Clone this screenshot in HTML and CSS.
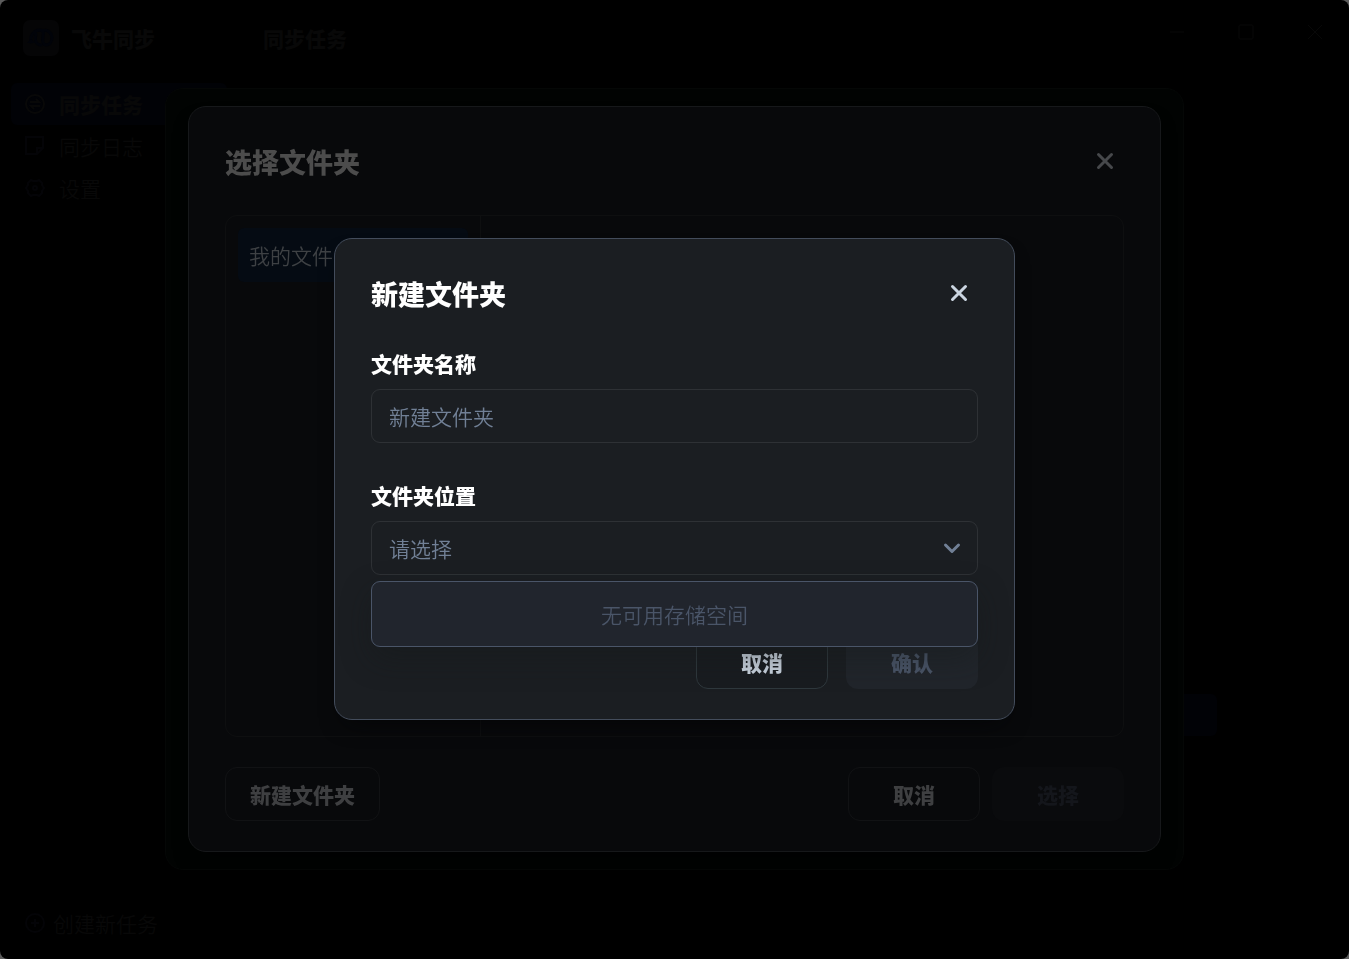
FILE: index.html
```html
<!DOCTYPE html>
<html lang="zh-CN">
<head>
<meta charset="utf-8">
<meta name="viewport" content="width=device-width, initial-scale=1">
<title>飞牛同步</title>
<link rel="stylesheet" href="styles.css">
</head>
<body>
<div class="window">
  <aside class="sidebar">
    <div class="brand">
      <svg class="brand-logo" viewBox="0 0 36 36" aria-hidden="true">
        <rect width="36" height="36" rx="7" fill="#050506"/>
        <path d="M8 22c-1-7 3-12 9-12 3 0 4 2 3 6-1 5 0 9 3 9 4 0 6-4 6-8M13 14c-2 6 0 11 5 11M19 11c5-2 9 1 10 6" fill="none" stroke="#010309" stroke-width="3" stroke-linecap="round"/>
        <path d="M4 23l4-4 4 4z" fill="#010309"/>
      </svg>
      <span class="brand-name">飞牛同步</span>
    </div>
    <nav class="nav">
      <a class="nav-item nav-item-active" href="#tasks">
        <svg class="icon" viewBox="0 0 20 20"><circle cx="10" cy="10" r="9"/><path d="M5 8h9l-3-3M15 12H6l3 3"/></svg>
        同步任务
      </a>
      <a class="nav-item" href="#logs">
        <svg class="icon" viewBox="0 0 20 20"><path d="M1 1h17v11l-6 6H1zM18 12h-6v6"/></svg>
        同步日志
      </a>
      <a class="nav-item" href="#settings">
        <svg class="icon" viewBox="0 0 20 20"><path d="M6 2l2 1h4l2-1 3 3v2l2 3-2 3v2l-3 3-2-1H8l-2 1-3-3v-2l-2-3 2-3V5z"/><circle cx="10" cy="10" r="2"/></svg>
        设置
      </a>
    </nav>
    <button class="create-task" type="button">
      <svg class="icon" viewBox="0 0 20 20"><circle cx="10" cy="10" r="9"/><path d="M10 6v8M6 10h8"/></svg>
      创建新任务
    </button>
  </aside>
  <main class="page">
    <header class="page-header">
      <h1 class="page-title">同步任务</h1>
      <div class="window-controls">
        <button class="control" type="button" aria-label="最小化"><svg class="icon-small" viewBox="0 0 16 16"><path d="M1 8h14"/></svg></button>
        <button class="control" type="button" aria-label="最大化"><svg class="icon-small" viewBox="0 0 16 16"><rect x="1" y="1" width="14" height="14" rx="1"/></svg></button>
        <button class="control" type="button" aria-label="关闭窗口"><svg class="icon-small" viewBox="0 0 16 16"><path d="M1 1l14 14M15 1L1 15"/></svg></button>
      </div>
    </header>
    <div class="page-body"><span class="task-action"></span></div>
  </main>
</div>

<div class="layer"><div class="task-panel"></div></div>

<div class="layer">
  <section class="dialog picker" aria-labelledby="picker-title">
    <header class="dialog-header">
      <h2 class="dialog-title" id="picker-title">选择文件夹</h2>
      <button class="close" type="button" aria-label="关闭"><svg class="close-icon" viewBox="0 0 18 18"><path d="M2.500 2.500l13 13M15.500 2.500l-13 13"/></svg></button>
    </header>
    <div class="browser">
      <div class="places"><button class="place" type="button">我的文件</button></div>
      <div class="files"></div>
    </div>
    <footer class="picker-footer">
      <button class="button button-auto" type="button">新建文件夹</button>
      <span class="spacer"></span>
      <button class="button" type="button">取消</button>
      <button class="button button-primary" type="button" disabled>选择</button>
    </footer>
  </section>
</div>

<div class="layer">
  <form class="dialog creator" role="dialog" aria-modal="true" aria-labelledby="creator-title">
    <header class="dialog-header">
      <h2 class="dialog-title" id="creator-title">新建文件夹</h2>
      <button class="close" type="button" aria-label="关闭"><svg class="close-icon" viewBox="0 0 18 18"><path d="M2.500 2.500l13 13M15.500 2.500l-13 13"/></svg></button>
    </header>
    <div class="fields">
      <div class="field">
        <label class="label" for="folder-name">文件夹名称</label>
        <input class="control-box" id="folder-name" type="text" placeholder="新建文件夹">
      </div>
      <div class="field">
        <label class="label" for="folder-place">文件夹位置</label>
        <div class="select-wrap">
          <select class="control-box" id="folder-place"><option>请选择</option></select>
          <svg class="chevron" viewBox="0 0 18 18" aria-hidden="true"><path d="M2.500 6L9 12.500 15.500 6"/></svg>
          <div class="dropdown">无可用存储空间</div>
        </div>
      </div>
    </div>
    <footer class="creator-footer">
      <button class="button" type="button">取消</button>
      <button class="button button-primary" type="submit" disabled>确认</button>
    </footer>
  </form>
</div>
</body>
</html>
```
FILE: styles.css
```css
* { box-sizing: border-box; }

body {
  margin: 0;
  background: #5c5c5c;
  color: #080808;
  font-family: "Noto Sans CJK SC", sans-serif;
  font-size: 21px;
  font-weight: 350;
  line-height: 32px;
}

button, input, select { font: inherit; color: inherit; }
button { padding: 0; border: 0; background: none; }
h1, h2 { margin: 0; font-weight: 900; }

svg { fill: none; stroke: currentColor; flex: none; }

/* Main window */
.window {
  display: flex;
  min-height: 100vh;
  border-radius: 8px;
  background: #000;
}
.sidebar {
  display: flex;
  flex-direction: column;
  width: 238px;
  padding: 20px 11px 20px;
}
.brand {
  display: flex;
  align-items: center;
  gap: 12px;
  height: 36px;
  padding-left: 12px;
  font-weight: 900;
}
.brand-logo { width: 36px; height: 36px; stroke: none; }
.nav { display: flex; flex-direction: column; margin-top: 27px; }
.nav-item {
  display: flex;
  align-items: center;
  gap: 14px;
  height: 42px;
  padding-left: 14px;
  border-radius: 6px;
  color: inherit;
  text-decoration: none;
}
.nav-item-active { background: #010206; font-weight: 900; }
.icon { width: 20px; height: 20px; color: #040407; stroke-width: 2; }
.nav-item-active .icon { color: #080808; }
.create-task {
  display: flex;
  align-items: center;
  gap: 8px;
  margin-top: auto;
  padding-left: 14px;
}
.page { flex: 1; display: flex; flex-direction: column; }
.page-header {
  display: flex;
  justify-content: space-between;
  padding: 20px 0 0 25px;
}
.page-title { font-size: 21px; line-height: 36px; }
.window-controls { display: flex; }
.control {
  display: grid;
  place-items: center;
  width: 69px;
  height: 24px;
}
.icon-small { width: 16px; height: 16px; }
.page-body {
  display: flex;
  flex: 1;
  align-items: flex-end;
  justify-content: flex-end;
  padding: 0 132px 223px 0;
}
.task-action { width: 132px; height: 42px; border-radius: 6px; background: #010206; }

/* Stacked dialogs */
.layer {
  position: fixed;
  inset: 0;
  display: grid;
  place-items: center;
  padding-bottom: 2px;
}
.task-panel {
  width: 1019px;
  max-width: 100%;
  height: 782px;
  border: 1px solid #050706;
  border-radius: 18px;
  background: #010302;
}
.dialog {
  display: flex;
  flex-direction: column;
  max-width: 100%;
  padding: 36px 36px 30px;
  border: 1px solid;
  border-radius: 18px;
}
.dialog-header {
  display: flex;
  justify-content: space-between;
  height: 40px;
}
.dialog-title { font-size: 27px; line-height: 38px; }
.close { width: 38px; height: 36px; display: grid; place-items: center; }
.close-icon { width: 18px; height: 18px; stroke-width: 3; stroke-linecap: round; }

.button {
  width: 132px;
  height: 54px;
  border: 1px solid;
  border-radius: 12px;
  font-weight: 900;
}
.button-auto { width: auto; padding: 0 24px; }

/* Folder picker */
.picker {
  width: 973px;
  border-color: #16181a;
  background: #08090b;
  box-shadow: 0 12px 24px -12px #000;
}
.picker .dialog-title { color: #4c4c4c; }
.picker .close { color: #46484b; }
.browser {
  display: flex;
  height: 522px;
  margin: 32px 0 30px;
  border: 1px solid #0e0f10;
  border-radius: 12px;
}
.places {
  width: 255px;
  padding: 12px;
  border-right: 1px solid #0e0f10;
}
.place {
  display: block;
  width: 100%;
  height: 54px;
  padding: 0 11px;
  border-radius: 6px;
  background: #050b13;
  color: #3e4144;
  text-align: left;
}
.files { flex: 1; }
.picker-footer { display: flex; gap: 12px; }
.spacer { flex: 1; }
.picker .button { border-color: #111214; color: #3e3f41; }
.picker .button-primary { border-color: transparent; background: #0a0b0d; color: #14161b; }

/* New folder form */
.creator {
  width: 681px;
  border-color: #434c5b;
  background: #1b1e22;
  box-shadow: 0 12px 24px -12px #040506;
}
.creator .dialog-title { color: #fff; }
.creator .close { color: #cbd5e1; }
.fields {
  display: flex;
  flex-direction: column;
  gap: 37px;
  margin: 33px 0 60px;
}
.field { display: flex; flex-direction: column; gap: 11px; }
.label { color: #fff; font-weight: 900; line-height: 30px; }
.control-box {
  display: block;
  width: 100%;
  height: 54px;
  padding: 0 17px;
  border: 1px solid #2e3135;
  border-radius: 9px;
  outline: 0;
  background: transparent;
  color: #718096;
  appearance: none;
}
.control-box::placeholder { color: #718096; opacity: 1; }
.select-wrap { position: relative; }
.chevron {
  position: absolute;
  top: 18px;
  right: 17px;
  width: 18px;
  height: 18px;
  color: #718096;
  stroke-width: 3;
  stroke-linecap: round;
  stroke-linejoin: round;
}
.dropdown {
  position: absolute;
  top: 60px;
  left: 0;
  right: 0;
  padding: 16px;
  border: 1px solid #4a5568;
  border-radius: 9px;
  background: #21252d;
  color: #4a5568;
  text-align: center;
  box-shadow: 0 12px 30px rgba(20, 24, 26, 0.4);
}
.creator-footer { display: flex; justify-content: flex-end; gap: 18px; }
.creator .button { border-color: #2f383d; background: #191c20; color: #cbd5e1; }
.creator .button-primary { border-color: transparent; background: #21252b; color: #4a5568; }
```
